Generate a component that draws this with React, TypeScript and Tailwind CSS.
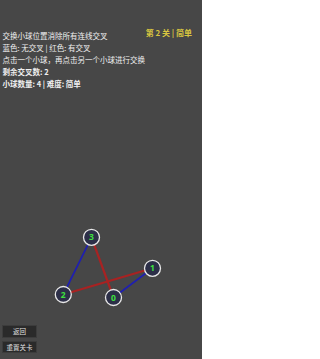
import React from "react";

const balls = [
  { id: 0, x: 113.5, y: 297.5 },
  { id: 1, x: 152.5, y: 268.3 },
  { id: 2, x: 63.3, y: 294.5 },
  { id: 3, x: 91.5, y: 237.3 },
];

const edges: { a: number; b: number; c: string; w: number }[] = [
  { a: 3, b: 2, c: "#1f1fb0", w: 1.7 },
  { a: 0, b: 1, c: "#1f1fb0", w: 1.7 },
  { a: 3, b: 0, c: "#a82222", w: 2.2 },
  { a: 2, b: 1, c: "#a82222", w: 2.2 },
];

export default function App() {
  const font = { fontFamily: '"Noto Sans CJK SC", "Noto Sans", sans-serif' };
  return (
    <div
      className="relative w-[202px] h-[359px] bg-[#474747] overflow-hidden flex flex-col text-[#f0f0f0]"
      style={font}
    >
      <svg className="absolute left-0 top-0" width={202} height={359} viewBox="0 0 202 359">
        {edges.map((e, i) => {
          const A = balls[e.a];
          const B = balls[e.b];
          return (
            <line key={i} x1={A.x} y1={A.y} x2={B.x} y2={B.y} stroke={e.c} strokeWidth={e.w} />
          );
        })}
        {balls.map((b) => (
          <g key={b.id}>
            <circle cx={b.x} cy={b.y} r={8} fill="#2c2f48" stroke="#e8e8e8" strokeWidth={1.3} />
            <text
              x={b.x}
              y={b.y + 3}
              textAnchor="middle"
              fontSize={8.5}
              fontWeight={700}
              fill="#3ee03e"
              fontFamily="'Noto Sans', sans-serif"
            >
              {b.id}
            </text>
          </g>
        ))}
      </svg>

      <div className="relative flex justify-between items-start pt-[29.5px] pl-[2.5px] pr-[10px]">
        <div className="flex flex-col text-[7.5px] leading-[12px]">
          <div>交换小球位置消除所有连线交叉</div>
          <div>蓝色: 无交叉 | 红色: 有交叉</div>
          <div>点击一个小球，再点击另一个小球进行交换</div>
          <div className="font-bold">剩余交叉数: 2</div>
          <div className="font-bold">小球数量: 4 | 难度: 简单</div>
        </div>
        <div className="mt-[-2.5px] text-[8px] leading-[12px] font-bold text-[#d9c640]">
          第 2 关 | 简单
        </div>
      </div>

      <div className="flex-1" />

      <div className="relative flex flex-col gap-[3px] pl-[2px] pb-[6px]">
        <button className="w-[35px] h-[12.5px] bg-[#2a2a2a] border border-[#3c3c3c] text-[6.5px] leading-none text-[#e0e0e0] flex items-center justify-center">
          返回
        </button>
        <button className="w-[35px] h-[12.5px] bg-[#2a2a2a] border border-[#3c3c3c] text-[6.5px] leading-none text-[#e0e0e0] flex items-center justify-center">
          重置关卡
        </button>
      </div>
    </div>
  );
}
